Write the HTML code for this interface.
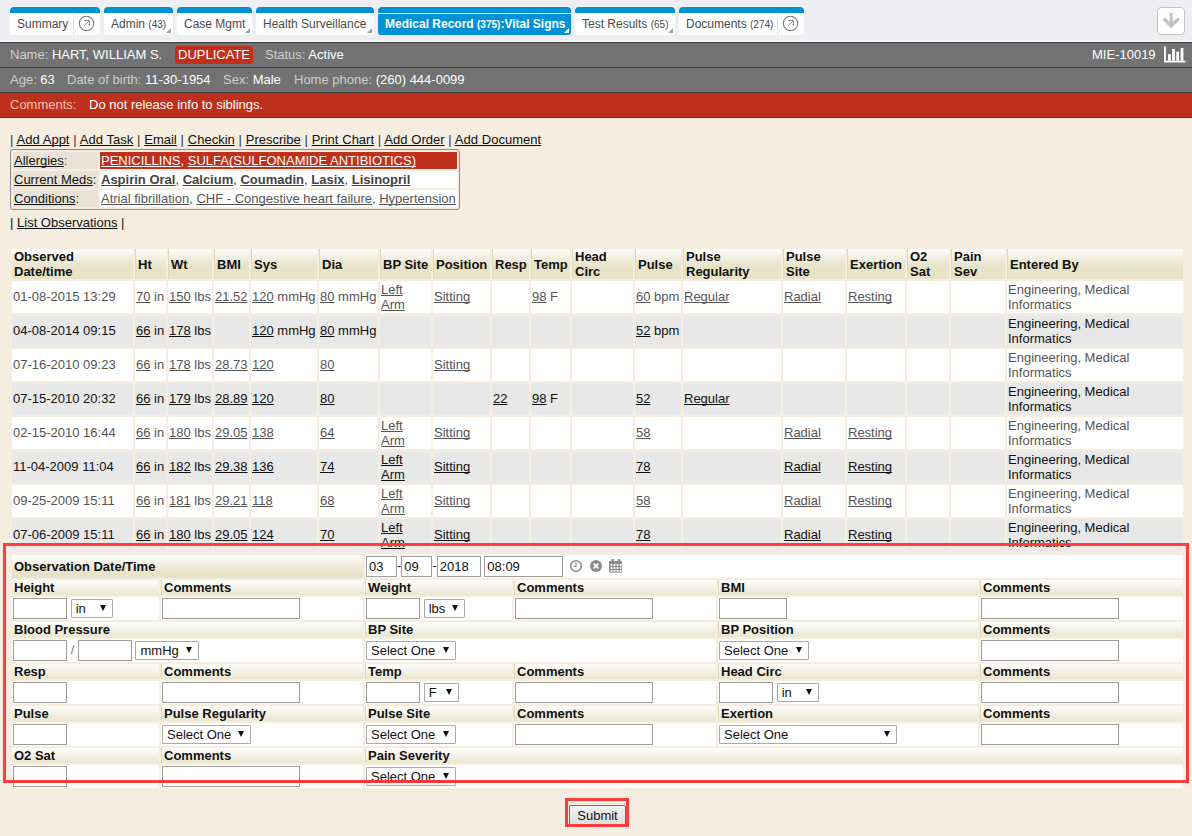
<!DOCTYPE html>
<html><head><meta charset="utf-8">
<style>
*{box-sizing:border-box}
html,body{margin:0;padding:0}
body{width:1192px;height:836px;overflow:hidden;position:relative;background:#f4ede0;font-family:"Liberation Sans",sans-serif;font-size:13px;color:#222}
.abs{position:absolute}
#topbg{left:0;top:0;width:1192px;height:41px;background:#eeeef3}
#wline{left:0;top:41px;width:1192px;height:1px;background:#fff}
.tab{position:absolute;top:7px;height:28px;border-radius:4px 4px 3px 3px;background:#fff;overflow:hidden;font-size:12px;color:#4a4a4a;white-space:nowrap}
.tab .bt{position:absolute;left:0;top:0;right:0;height:6px;background:#0092d5}
.tab .tx{position:absolute;top:10px;line-height:14px}
.tab small{font-size:10px}
.tab .tri{position:absolute;right:2px;bottom:2px;width:0;height:0;border-style:solid;border-width:0 0 5px 5px;border-color:transparent transparent #a0a0a0 transparent}
.tab .div{position:absolute;top:6px;bottom:0;width:1px;background:#e0e0e0}
.tab.act{background:#0092d5;color:#fff;font-weight:bold}
.tab.act .wl{position:absolute;left:0;right:0;top:6px;height:1px;background:#fff}
.tab.act .tri{border-color:transparent transparent #fff transparent}
.bar{position:absolute;left:0;width:1192px;color:#fff;white-space:nowrap}
.bar .l{color:#cfcfcf}
#bar1{top:42px;height:25px;background:#727272;border-top:1px solid #3b3b3b;line-height:24px}
#bar2{top:67px;height:25px;background:#727272;border-top:1px solid #3b3b3b;line-height:24px}
#bar3{top:92px;height:26px;background:#be2f1c;border-top:1px solid #3b3b3b;border-bottom:1px solid #3b3b3b;line-height:24px}
a{color:inherit;text-decoration:underline;text-decoration-skip-ink:none}
#links{left:10px;top:132px;word-spacing:0.2px;line-height:16px;color:#111;white-space:nowrap}
#links .p{color:#333}
#allg{left:10px;top:149px;width:450px;height:61px;border:1px solid #8c8c8c;border-radius:3px}
.ar{position:absolute;left:2px;height:17px;line-height:17px;white-space:nowrap}
.ar .lb{position:absolute;left:0;top:0;width:85px;height:17px;line-height:17px;background:#e8e3d6;padding-left:1px;color:#111}
.ar .vl{position:absolute;left:87px;top:0;width:357px;height:17px;line-height:17px;padding-left:1px}
#listobs{left:10px;top:215px;line-height:16px;white-space:nowrap;color:#111}
table{border-collapse:separate;border-spacing:2px;table-layout:fixed}
td,th{padding:0 0 0 2px;overflow:hidden;vertical-align:middle;text-align:left;line-height:15px;white-space:nowrap}
th{font-weight:bold;color:#111;background:linear-gradient(#fdfcf8 0px,#fbfaf3 3px,#f2efe2 9px,#eae6cf 15px,#e8e3c7 19px,#e8e3c7 100%)}
th+th{border-left:1px solid #dcd9bd}
#obs{position:absolute;left:10px;top:247px;width:1175px}
#obs tr.h th{height:30px;white-space:normal}
#obs tr.r td{height:32px;padding:0 0 2px 1px;background:#fff;color:#555}
#obs tr.g td{height:32px;padding:0 0 2px 1px;background:#e8e8e8;color:#111}
#obs tr td.w,#obs tr td.two{white-space:normal;padding-bottom:0}
#frm{position:absolute;left:10px;top:553px;width:1175px}
#frm th{height:15px;line-height:15px}
#frm td{height:23px;background:#fff;padding-left:1px}
#frm tr.top th{height:23px}
.ip{display:inline-block;vertical-align:middle;height:21px;border:1px solid #9c9c9c;background:#fff}
.vi{padding-left:2px;line-height:19px;color:#111;font-size:13px}
.sl{display:inline-block;vertical-align:middle;height:19px;border:1px solid #a9a9a9;border-radius:1px;background:#fff;position:relative;line-height:17px;padding-left:4px;color:#111}
.sl:after{content:"";position:absolute;right:6px;top:5px;border-style:solid;border-width:6px 3px 0 3px;border-color:#111 transparent transparent transparent}
#redbox{left:3px;top:543px;width:1186px;height:240px;border:3px solid #ff3b3b}
#subbox{left:565px;top:798px;width:64px;height:29px;border:3px solid #ff3b3b}
#submit{left:569px;top:805px;width:57px;height:21px;border:1px solid #707070;border-radius:2px;background:linear-gradient(#f4f4f4,#dcdcdc);text-align:center;line-height:19px;color:#111}
</style></head>
<body>
<div id="topbg" class="abs"></div>
<div id="wline" class="abs"></div>

<div class="tab" style="left:10px;width:90px"><div class="bt"></div><span class="tx" style="left:7px">Summary</span><div class="div" style="left:63px"></div>
<svg class="abs" style="left:68px;top:8px" width="17" height="17" viewBox="0 0 17 17"><circle cx="8.5" cy="8.5" r="7.2" fill="none" stroke="#7a7a7a" stroke-width="1.1"/><path d="M5.8 11.2 L11 6 M6.3 5.6 H11.4 V10.7" fill="none" stroke="#888" stroke-width="1"/></svg></div>
<div class="tab" style="left:104px;width:69px"><div class="bt"></div><span class="tx" style="left:7px">Admin <small>(43)</small></span><div class="tri"></div></div>
<div class="tab" style="left:177px;width:75px"><div class="bt"></div><span class="tx" style="left:7px">Case Mgmt</span><div class="tri"></div></div>
<div class="tab" style="left:256px;width:118px"><div class="bt"></div><span class="tx" style="left:7px">Health Surveillance</span><div class="tri"></div></div>
<div class="tab act" style="left:378px;width:193px"><div class="wl"></div><span class="tx" style="left:7px">Medical Record <small>(375)</small>:Vital Signs</span><div class="tri"></div></div>
<div class="tab" style="left:575px;width:100px"><div class="bt"></div><span class="tx" style="left:7px">Test Results <small>(65)</small></span><div class="tri"></div></div>
<div class="tab" style="left:679px;width:125px"><div class="bt"></div><span class="tx" style="left:7px">Documents <small>(274)</small></span><div class="div" style="left:98px"></div>
<svg class="abs" style="left:103px;top:8px" width="17" height="17" viewBox="0 0 17 17"><circle cx="8.5" cy="8.5" r="7.2" fill="none" stroke="#7a7a7a" stroke-width="1.1"/><path d="M5.8 11.2 L11 6 M6.3 5.6 H11.4 V10.7" fill="none" stroke="#888" stroke-width="1"/></svg></div>

<div class="abs" style="left:1157px;top:7px;width:28px;height:28px;border:1px solid #c4c4c4;border-radius:4px;background:#fff">
<svg class="abs" style="left:0;top:0" width="26" height="26" viewBox="0 0 26 26"><path d="M13.2 5 V17" stroke="#c2c2c6" stroke-width="3.2"/><path d="M6.6 11.6 L13.2 17.8 L19.8 11.6" fill="none" stroke="#c2c2c6" stroke-width="3.4" stroke-linecap="round"/></svg></div>

<div id="bar1" class="bar"><span class="abs" style="left:10px;top:0"><span class="l">Name:</span> HART, WILLIAM S.</span>
<span class="abs" style="left:175px;top:3px;width:78px;height:18px;background:#c0301c;border-radius:3px;line-height:18px;padding-left:3px">DUPLICATE</span>
<span class="abs" style="left:265px;top:0"><span class="l">Status:</span> Active</span>
<span class="abs" style="left:1092px;top:0">MIE-10019</span>
<svg class="abs" style="left:1163px;top:3px" width="24" height="18" viewBox="0 0 24 18"><path d="M2 0.6 V15.6 H22.5" fill="none" stroke="#fff" stroke-width="1.8"/><rect x="5" y="8.1" width="2.8" height="6.7" fill="#fff"/><rect x="9.1" y="2.9" width="2.8" height="11.9" fill="#fff"/><rect x="13.3" y="5.7" width="2.8" height="9.1" fill="#fff"/><rect x="17.6" y="2" width="2.8" height="12.8" fill="#fff"/></svg>
</div>
<div id="bar2" class="bar"><span class="abs" style="left:10px;top:0"><span class="l">Age:</span> 63</span>
<span class="abs" style="left:67px;top:0"><span class="l">Date of birth:</span> 11-30-1954</span>
<span class="abs" style="left:223px;top:0"><span class="l">Sex:</span> Male</span>
<span class="abs" style="left:294px;top:0"><span class="l">Home phone:</span> (260) 444-0099</span>
</div>
<div id="bar3" class="bar"><span class="abs" style="left:10px;top:0;color:#f3c4b6">Comments:</span><span class="abs" style="left:89px;top:0">Do not release info to siblings.</span></div>

<div id="links" class="abs"><span class="p">|</span> <a>Add Appt</a> <span class="p">|</span> <a>Add Task</a> <span class="p">|</span> <a>Email</a> <span class="p">|</span> <a>Checkin</a> <span class="p">|</span> <a>Prescribe</a> <span class="p">|</span> <a>Print Chart</a> <span class="p">|</span> <a>Add Order</a> <span class="p">|</span> <a>Add Document</a></div>

<div id="allg" class="abs">
<div class="ar" style="top:2px"><div class="lb"><a>Allergies</a><span style="color:#666">:</span></div><div class="vl" style="background:#c0301c;color:#fff"><a>PENICILLINS</a>, <a>SULFA(SULFONAMIDE ANTIBIOTICS)</a></div></div>
<div class="ar" style="top:21px"><div class="lb"><a>Current Meds</a>:</div><div class="vl" style="background:#fff;color:#444;font-weight:bold"><a>Aspirin Oral</a><span style="font-weight:normal">, </span><a>Calcium</a><span style="font-weight:normal">, </span><a>Coumadin</a><span style="font-weight:normal">, </span><a>Lasix</a><span style="font-weight:normal">, </span><a>Lisinopril</a></div></div>
<div class="ar" style="top:40px"><div class="lb"><a>Conditions</a>:</div><div class="vl" style="background:#fff;color:#555"><a>Atrial fibrillation</a>, <a>CHF - Congestive heart failure</a>, <a>Hypertension</a></div></div>
</div>

<div id="listobs" class="abs"><span class="p">|</span> <a>List Observations</a> <span class="p">|</span></div>

<!--OBS-->
<table id="obs"><colgroup><col style="width:121px"><col style="width:31px"><col style="width:44px"><col style="width:35px"><col style="width:66px"><col style="width:59px"><col style="width:51px"><col style="width:57px"><col style="width:37px"><col style="width:39px"><col style="width:61px"><col style="width:46px"><col style="width:98px"><col style="width:62px"><col style="width:58px"><col style="width:42px"><col style="width:54px"><col style="width:176px"></colgroup>
<tr class="h"><th>Observed<br>Date/time</th><th>Ht</th><th>Wt</th><th>BMI</th><th>Sys</th><th>Dia</th><th>BP Site</th><th>Position</th><th>Resp</th><th>Temp</th><th>Head<br>Circ</th><th>Pulse</th><th>Pulse<br>Regularity</th><th>Pulse<br>Site</th><th>Exertion</th><th>O2<br>Sat</th><th>Pain<br>Sev</th><th>Entered By</th></tr>
<tr class="r"><td>01-08-2015 13:29</td><td><a>70</a> in</td><td><a>150</a> lbs</td><td><a>21.52</a></td><td><a>120</a> mmHg</td><td><a>80</a> mmHg</td><td class="two"><a>Left<br>Arm</a></td><td><a>Sitting</a></td><td></td><td><a>98</a> F</td><td></td><td><a>60</a> bpm</td><td><a>Regular</a></td><td><a>Radial</a></td><td><a>Resting</a></td><td></td><td></td><td class="w">Engineering, Medical<br>Informatics</td></tr>
<tr class="g"><td>04-08-2014 09:15</td><td><a>66</a> in</td><td><a>178</a> lbs</td><td></td><td><a>120</a> mmHg</td><td><a>80</a> mmHg</td><td></td><td></td><td></td><td></td><td></td><td><a>52</a> bpm</td><td></td><td></td><td></td><td></td><td></td><td class="w">Engineering, Medical<br>Informatics</td></tr>
<tr class="r"><td>07-16-2010 09:23</td><td><a>66</a> in</td><td><a>178</a> lbs</td><td><a>28.73</a></td><td><a>120</a></td><td><a>80</a></td><td></td><td><a>Sitting</a></td><td></td><td></td><td></td><td></td><td></td><td></td><td></td><td></td><td></td><td class="w">Engineering, Medical<br>Informatics</td></tr>
<tr class="g"><td>07-15-2010 20:32</td><td><a>66</a> in</td><td><a>179</a> lbs</td><td><a>28.89</a></td><td><a>120</a></td><td><a>80</a></td><td></td><td></td><td><a>22</a></td><td><a>98</a> F</td><td></td><td><a>52</a></td><td><a>Regular</a></td><td></td><td></td><td></td><td></td><td class="w">Engineering, Medical<br>Informatics</td></tr>
<tr class="r"><td>02-15-2010 16:44</td><td><a>66</a> in</td><td><a>180</a> lbs</td><td><a>29.05</a></td><td><a>138</a></td><td><a>64</a></td><td class="two"><a>Left<br>Arm</a></td><td><a>Sitting</a></td><td></td><td></td><td></td><td><a>58</a></td><td></td><td><a>Radial</a></td><td><a>Resting</a></td><td></td><td></td><td class="w">Engineering, Medical<br>Informatics</td></tr>
<tr class="g"><td>11-04-2009 11:04</td><td><a>66</a> in</td><td><a>182</a> lbs</td><td><a>29.38</a></td><td><a>136</a></td><td><a>74</a></td><td class="two"><a>Left<br>Arm</a></td><td><a>Sitting</a></td><td></td><td></td><td></td><td><a>78</a></td><td></td><td><a>Radial</a></td><td><a>Resting</a></td><td></td><td></td><td class="w">Engineering, Medical<br>Informatics</td></tr>
<tr class="r"><td>09-25-2009 15:11</td><td><a>66</a> in</td><td><a>181</a> lbs</td><td><a>29.21</a></td><td><a>118</a></td><td><a>68</a></td><td class="two"><a>Left<br>Arm</a></td><td><a>Sitting</a></td><td></td><td></td><td></td><td><a>58</a></td><td></td><td><a>Radial</a></td><td><a>Resting</a></td><td></td><td></td><td class="w">Engineering, Medical<br>Informatics</td></tr>
<tr class="g"><td>07-06-2009 15:11</td><td><a>66</a> in</td><td><a>180</a> lbs</td><td><a>29.05</a></td><td><a>124</a></td><td><a>70</a></td><td class="two"><a>Left<br>Arm</a></td><td><a>Sitting</a></td><td></td><td></td><td></td><td><a>78</a></td><td></td><td><a>Radial</a></td><td><a>Resting</a></td><td></td><td></td><td class="w">Engineering, Medical<br>Informatics</td></tr>
</table>
<!--/OBS-->

<!--FORM-->
<table id="frm"><colgroup><col style="width:147px"><col style="width:202px"><col style="width:147px"><col style="width:202px"><col style="width:260px"><col style="width:203px"></colgroup>
<tr class="top"><th colspan="2">Observation Date/Time</th><td colspan="4"><span class="ip vi" style="width:31px">03</span>-<span class="ip vi" style="width:31px">09</span>-<span class="ip vi" style="width:44px">2018</span> <span class="ip vi" style="width:79px">08:09</span><svg class="ico" width="60" height="16" viewBox="0 0 60 16" style="vertical-align:middle;margin-left:5px;position:relative;top:-1px">
<circle cx="8" cy="8" r="5.3" fill="none" stroke="#8c8c8c" stroke-width="1.6"/><path d="M8 4.6 V8.5 H5.4" fill="none" stroke="#8c8c8c" stroke-width="1.2"/>
<circle cx="28" cy="8" r="6" fill="#8c8c8c"/><path d="M25.7 5.7 L30.3 10.3 M30.3 5.7 L25.7 10.3" stroke="#fff" stroke-width="1.8"/>
<rect x="41" y="3" width="13" height="11.6" fill="#8c8c8c"/><rect x="43.6" y="1" width="2.4" height="3.2" rx="0.6" fill="#8c8c8c"/><rect x="49.8" y="1" width="2.4" height="3.2" rx="0.6" fill="#8c8c8c"/>
<g fill="#fff"><rect x="42.6" y="6" width="1.8" height="2"/><rect x="45.6" y="6" width="1.8" height="2"/><rect x="48.6" y="6" width="1.8" height="2"/><rect x="51.6" y="6" width="1.8" height="2"/>
<rect x="42.6" y="9" width="1.8" height="2"/><rect x="45.6" y="9" width="1.8" height="2"/><rect x="48.6" y="9" width="1.8" height="2"/><rect x="51.6" y="9" width="1.8" height="2"/>
<rect x="42.6" y="12" width="1.8" height="1.8"/><rect x="45.6" y="12" width="1.8" height="1.8"/><rect x="48.6" y="12" width="1.8" height="1.8"/><rect x="51.6" y="12" width="1.8" height="1.8"/></g></svg></td></tr>
<tr><th>Height</th><th>Comments</th><th>Weight</th><th>Comments</th><th>BMI</th><th>Comments</th></tr>
<tr><td><span class="ip" style="width:54px"></span> <span class="sl" style="width:42px">in</span></td><td><span class="ip" style="width:138px"></span></td><td><span class="ip" style="width:54px"></span> <span class="sl" style="width:41px">lbs</span></td><td><span class="ip" style="width:138px"></span></td><td><span class="ip" style="width:68px"></span></td><td><span class="ip" style="width:138px"></span></td></tr>
<tr><th colspan="2">Blood Pressure</th><th colspan="2">BP Site</th><th>BP Position</th><th>Comments</th></tr>
<tr><td colspan="2"><span class="ip" style="width:54px"></span> <span style="color:#777">/</span> <span class="ip" style="width:54px"></span> <span class="sl" style="width:64px;margin-left:-1px;padding-left:5px">mmHg</span></td><td colspan="2"><span class="sl" style="width:90px">Select One</span></td><td><span class="sl" style="width:90px">Select One</span></td><td><span class="ip" style="width:138px"></span></td></tr>
<tr><th>Resp</th><th>Comments</th><th>Temp</th><th>Comments</th><th>Head Circ</th><th>Comments</th></tr>
<tr><td><span class="ip" style="width:54px"></span></td><td><span class="ip" style="width:138px"></span></td><td><span class="ip" style="width:54px"></span> <span class="sl" style="width:35px">F</span></td><td><span class="ip" style="width:138px"></span></td><td><span class="ip" style="width:54px"></span> <span class="sl" style="width:42px">in</span></td><td><span class="ip" style="width:138px"></span></td></tr>
<tr><th>Pulse</th><th>Pulse Regularity</th><th>Pulse Site</th><th>Comments</th><th>Exertion</th><th>Comments</th></tr>
<tr><td><span class="ip" style="width:54px"></span></td><td><span class="sl" style="width:89px">Select One</span></td><td><span class="sl" style="width:90px">Select One</span></td><td><span class="ip" style="width:138px"></span></td><td><span class="sl" style="width:178px">Select One</span></td><td><span class="ip" style="width:138px"></span></td></tr>
<tr><th>O2 Sat</th><th>Comments</th><th colspan="4">Pain Severity</th></tr>
<tr><td><span class="ip" style="width:54px"></span></td><td><span class="ip" style="width:138px"></span></td><td colspan="4"><span class="sl" style="width:90px">Select One</span></td></tr>
</table>
<!--/FORM-->

<div id="redbox" class="abs"></div>
<div id="submit" class="abs">Submit</div>
<div id="subbox" class="abs"></div>
</body></html>
